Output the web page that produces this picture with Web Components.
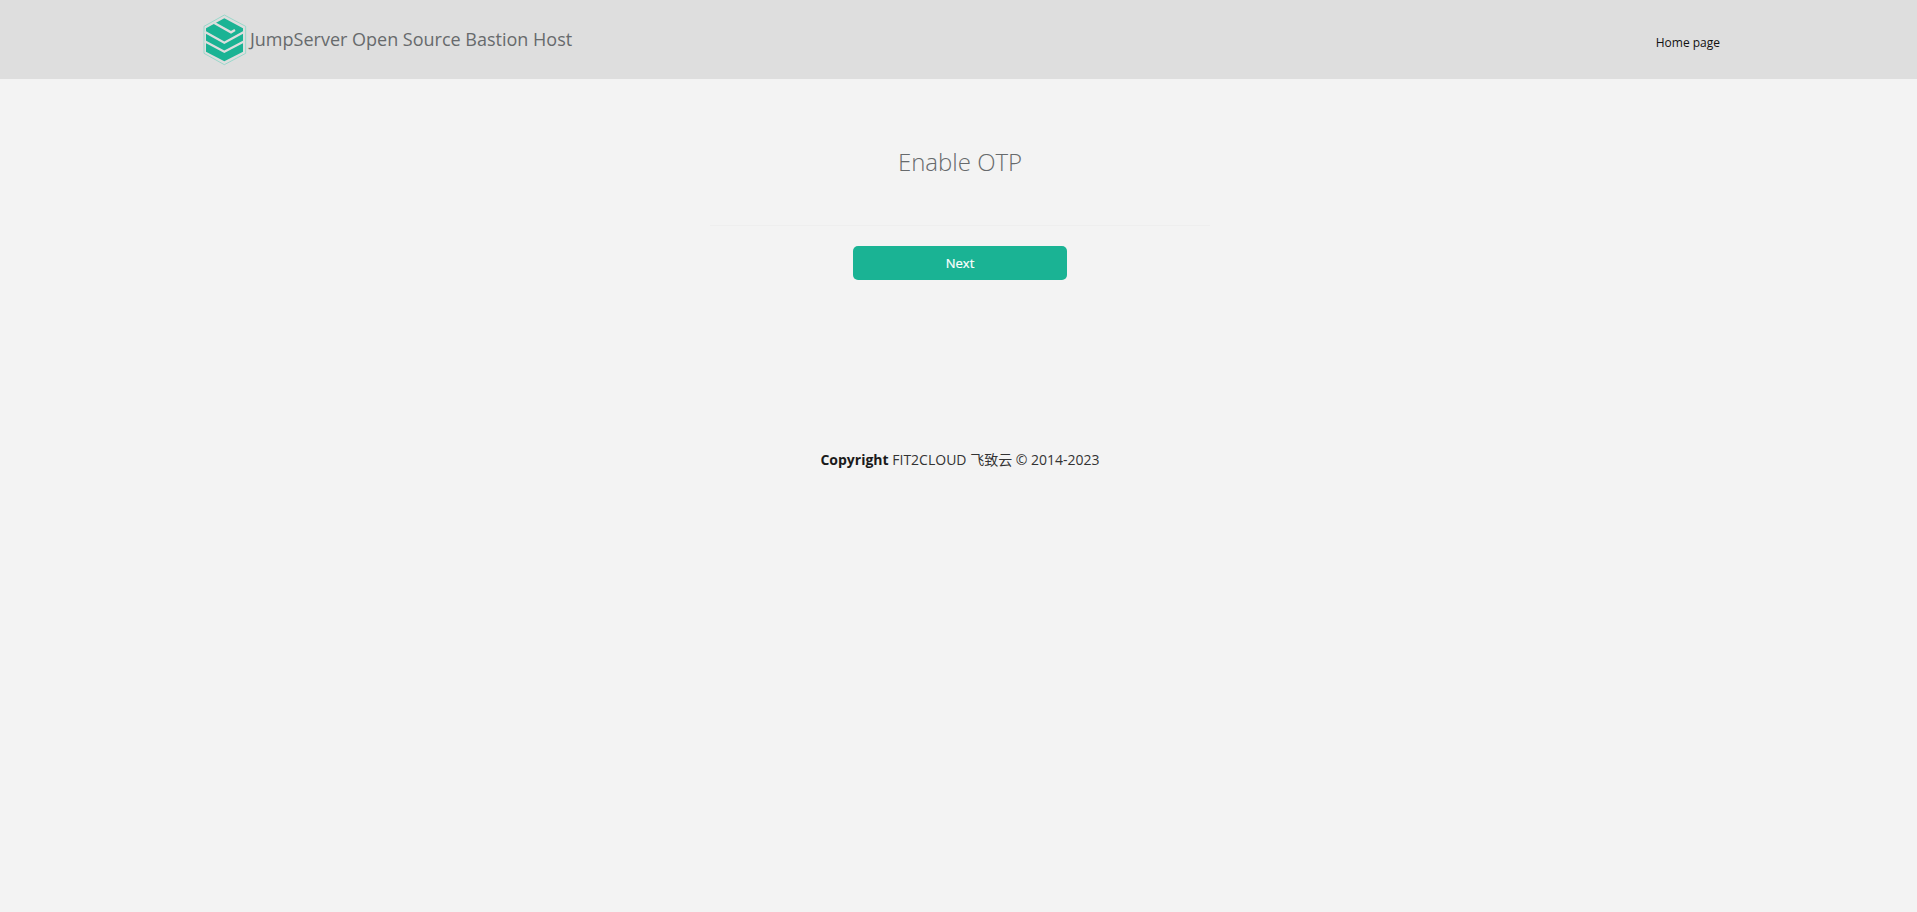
<!DOCTYPE html>
<html>
<head>
<meta charset="utf-8">
<title>Enable OTP</title>
<style>
    html, body {
        margin: 0;
        height: 100%;
    }
    body {
        background-color: #f3f3f3;
        font-family: "Open Sans", "Noto Sans CJK SC", sans-serif;
        font-size: 13px;
        color: #676a6c;
    }
</style>
</head>
<body>
<jms-header title-text="JumpServer Open Source Bastion Host" link-text="Home page"></jms-header>
<otp-panel heading="Enable OTP">
    <jms-button>Next</jms-button>
</otp-panel>
<jms-footer></jms-footer>

<script>
class JmsLogo extends HTMLElement {
    constructor () {
        super();
        this.attachShadow({ mode: 'open' }).innerHTML = `
            <style>
                :host { display: block; width: 44px; height: 52px; }
                svg { display: block; }
            </style>
            <svg width="44" height="52" viewBox="24 15 132 156">
                <polygon points="88,18 152,52 152,133 88,167 27,133 27,52" fill="none" stroke="#8ad6c6" stroke-width="2.5"/>
                <polygon points="88,28 144,58 144,128 88,157 33,128 33,58" fill="#1ab394"/>
                <g fill="none" stroke="#dedede" stroke-width="7">
                    <polyline points="58,42 108,70 120,63"/>
                    <polyline points="29,68 88,101 148,68"/>
                    <polyline points="29,97 88,128 148,97"/>
                </g>
            </svg>
        `;
    }
}

class JmsHeader extends HTMLElement {
    constructor () {
        super();
        this.attachShadow({ mode: 'open' }).innerHTML = `
            <style>
                :host {
                    display: flex;
                    box-sizing: border-box;
                    height: 79px;
                    padding: 14px 197px 0 203px;
                    background-color: #dedede;
                    justify-content: space-between;
                }
                .brand { display: flex; align-items: flex-start; }
                .title {
                    font-size: 18px;
                    line-height: 24px;
                    margin: 13px 0 0 3px;
                    color: #676a6c;
                }
                a {
                    font-size: 12px;
                    line-height: 16px;
                    margin-top: 21px;
                    color: #111;
                    text-decoration: none;
                }
            </style>
            <div class="brand">
                <jms-logo></jms-logo>
                <span class="title"></span>
            </div>
            <a href="#"></a>
        `;
        this.shadowRoot.querySelector('.title').textContent = this.getAttribute('title-text');
        this.shadowRoot.querySelector('a').textContent = this.getAttribute('link-text');
    }
}

class OtpPanel extends HTMLElement {
    constructor () {
        super();
        this.attachShadow({ mode: 'open' }).innerHTML = `
            <style>
                :host {
                    display: flex;
                    flex-direction: column;
                    align-items: center;
                    width: 500px;
                    margin-left: 710px;
                    padding-top: 66px;
                }
                h2 {
                    margin: 0;
                    font-size: 24px;
                    line-height: 33px;
                    font-weight: 300;
                    color: #676a6c;
                }
                hr {
                    align-self: stretch;
                    margin: 47px 0 20px;
                    border: 0;
                    border-top: 1px solid #eeeeee;
                }
            </style>
            <h2></h2>
            <hr>
            <slot></slot>
        `;
        this.shadowRoot.querySelector('h2').textContent = this.getAttribute('heading');
    }
}

class JmsButton extends HTMLElement {
    constructor () {
        super();
        this.attachShadow({ mode: 'open' }).innerHTML = `
            <style>
                :host {
                    display: block;
                    width: 214px;
                    height: 34px;
                    border-radius: 5px;
                    background-color: #1ab394;
                    color: #fff;
                    font-size: 13px;
                    font-weight: 500;
                    -webkit-text-stroke: 0.2px #fff;
                    line-height: 34px;
                    text-align: center;
                    cursor: pointer;
                }
            </style>
            <slot></slot>
        `;
    }
}

class JmsFooter extends HTMLElement {
    constructor () {
        super();
        this.attachShadow({ mode: 'open' }).innerHTML = `
            <style>
                :host {
                    display: block;
                    margin-top: 170px;
                    padding-left: 3px;
                    text-align: center;
                    font-size: 14px;
                    line-height: 20px;
                    color: #333;
                }
                strong { color: #1a1a1a; }
            </style>
            <strong>Copyright</strong> FIT2CLOUD 飞致云 © 2014-2023
        `;
    }
}

customElements.define('jms-logo', JmsLogo);
customElements.define('jms-header', JmsHeader);
customElements.define('otp-panel', OtpPanel);
customElements.define('jms-button', JmsButton);
customElements.define('jms-footer', JmsFooter);
</script>
</body>
</html>
